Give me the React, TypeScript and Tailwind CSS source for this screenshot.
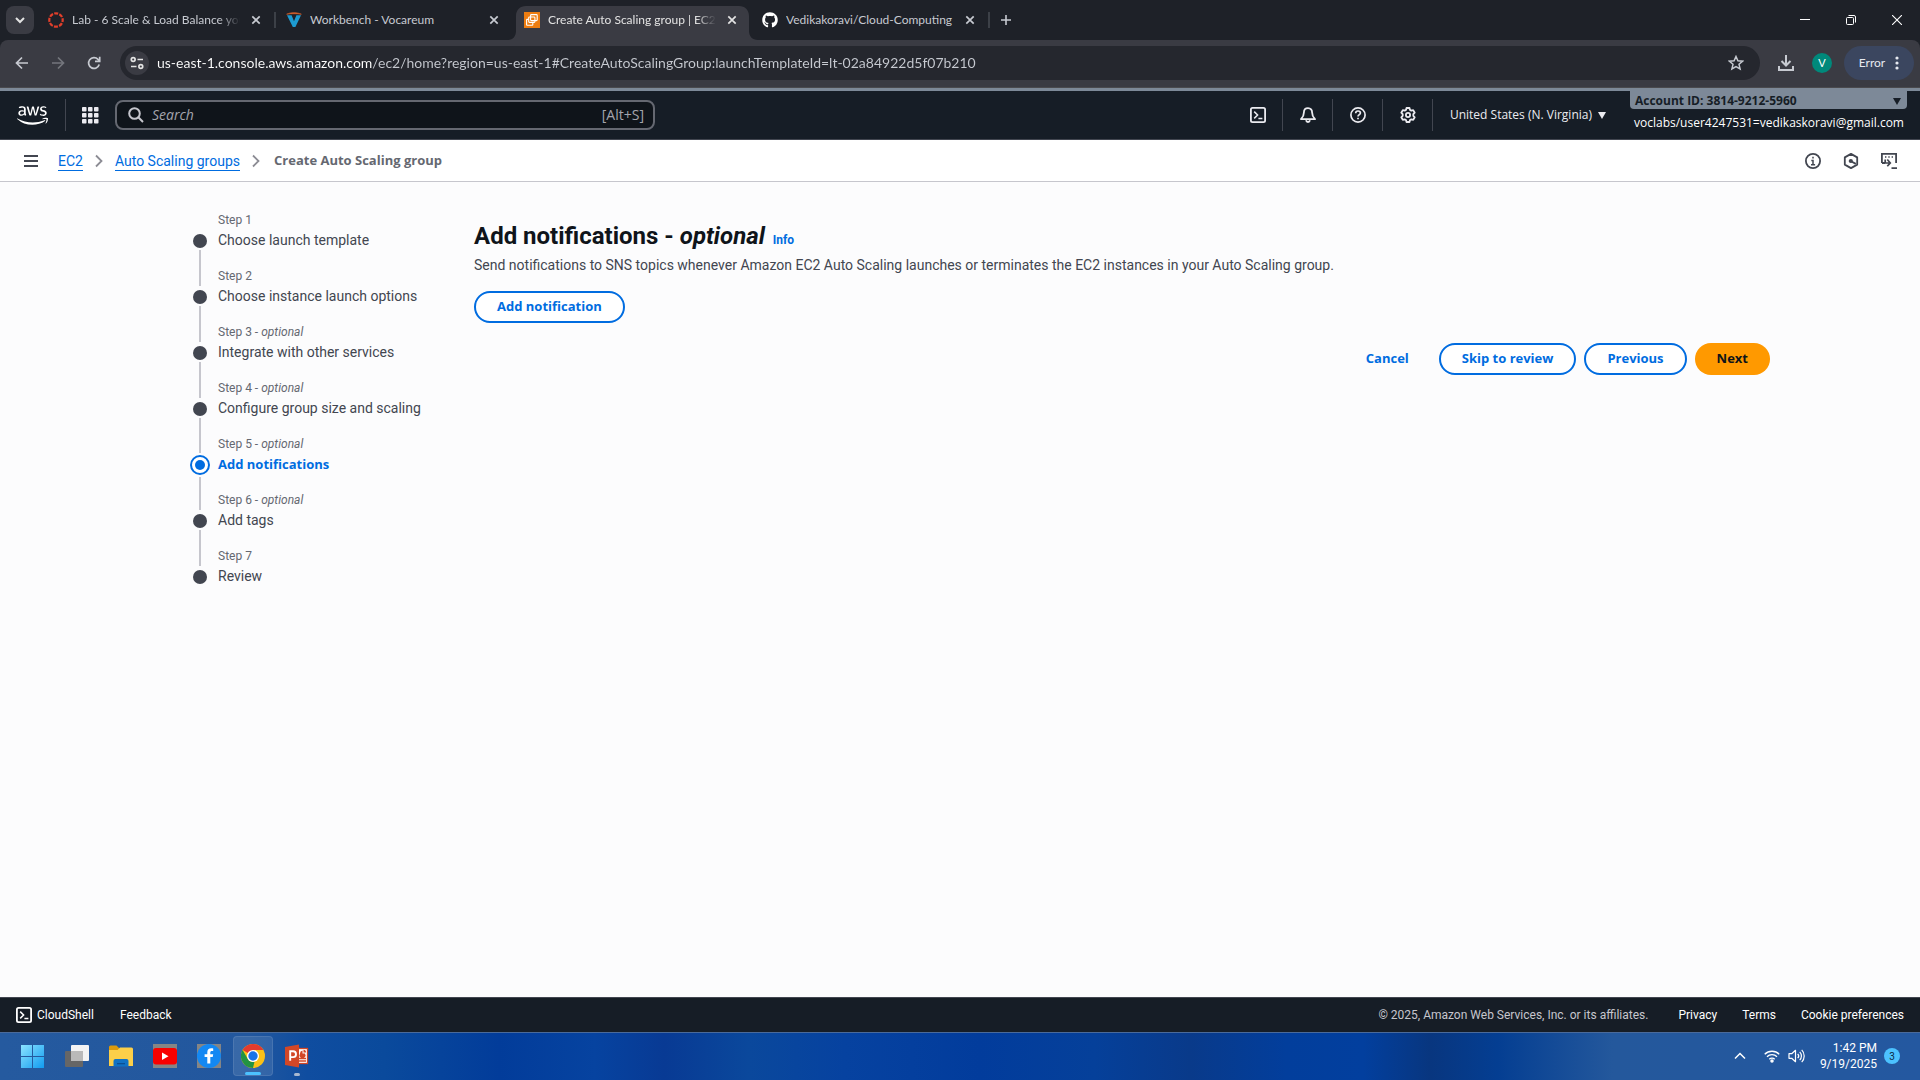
import React from "react";
import { FaAws, FaGithub } from "react-icons/fa";

type IconProps = { className?: string };

/* ---------- Browser icons ---------- */

const CloseIcon = ({ className = "size-4" }: IconProps) => (
  <svg viewBox="0 0 16 16" className={className} fill="none" stroke="currentColor" strokeWidth="1.7">
    <path d="M4.3 4.3l7.4 7.4M11.7 4.3l-7.4 7.4" />
  </svg>
);

const RingIcon = () => (
  <svg viewBox="0 0 16 16" className="size-4 shrink-0" fill="none">
    <circle cx="8" cy="8" r="6.7" stroke="#e13f2b" strokeWidth="2.2" strokeDasharray="4 1.26" strokeDashoffset="2" />
  </svg>
);

const VocareumIcon = () => (
  <svg viewBox="0 0 16 16" className="size-4 shrink-0">
    <path d="M1 3.2h4.6L8 9.2l2.4-6H15L9.4 15H6.8z" fill="#1d9bd1" />
    <path d="M.6 2.2C5 .1 11 .1 15.4 2.2 11 1.5 5 1.5.6 2.2z" fill="#d9622b" stroke="#d9622b" strokeWidth=".6" />
  </svg>
);

const Ec2Icon = () => (
  <svg viewBox="0 0 16 16" className="size-4 shrink-0">
    <rect width="16" height="16" fill="#ed7d11" />
    <g fill="none" stroke="#fff" strokeWidth="1.1">
      <rect x="6.6" y="2.6" width="6.6" height="6" rx=".8" />
      <rect x="4.7" y="5" width="6.2" height="5.4" rx=".8" />
      <path d="M4.5 7.4H3.1a.5.5 0 00-.5.5v4.9c0 .3.2.5.5.5h5.2c.3 0 .5-.2.5-.5v-2" />
    </g>
  </svg>
);

/* ---------- Console icons ---------- */

const ShellIcon = () => (
  <svg viewBox="0 0 16 16" className="size-4 shrink-0" fill="none" stroke="currentColor" strokeWidth="1.8">
    <rect x=".9" y=".9" width="14.2" height="14.2" rx="1.6" />
    <path d="M4.2 4.6L7.6 8l-3.4 3.4M8.4 11.6h4" strokeWidth="1.5" />
  </svg>
);
const BellIcon = () => (
  <svg viewBox="0 0 16 16" className="size-4" fill="none" stroke="currentColor" strokeWidth="1.8" strokeLinejoin="round">
    <path d="M8 1.1c-2.7 0-4.1 2-4.1 4.3 0 3.6-.9 4.7-2.9 6.8h14c-2-2.1-2.9-3.2-2.9-6.8 0-2.3-1.4-4.3-4.1-4.3z" />
    <path d="M6 13.2c.3 1.2 1 1.8 2 1.8s1.7-.6 2-1.8" />
  </svg>
);
const HelpIcon = () => (
  <svg viewBox="0 0 16 16" className="size-4" fill="none" stroke="currentColor" strokeWidth="1.7">
    <circle cx="8" cy="8" r="7.1" />
    <path d="M5.7 6.2C5.7 4.7 6.7 4 8 4s2.4.8 2.4 2c0 1.7-2.4 1.7-2.4 3.6" />
    <path d="M8 10.8v1.5" />
  </svg>
);
const GearIcon = () => (
  <svg viewBox="0 0 16 16" className="size-4" fill="none" stroke="currentColor" strokeWidth="1.8" strokeLinejoin="round">
    <path d="M6.5 1h3l.5 1.9 1.3.7 1.9-.5 1.5 2.6-1.4 1.5v1.6l1.4 1.5-1.5 2.6-1.9-.5-1.3.7-.5 1.9h-3l-.5-1.9-1.3-.7-1.9.5-1.5-2.6 1.4-1.5V7.2L1.3 5.7l1.5-2.6 1.9.5L6 2.9z" />
    <circle cx="8" cy="8" r="2.1" />
  </svg>
);
const InfoIcon = () => (
  <svg viewBox="0 0 16 16" className="size-4" fill="none" stroke="currentColor" strokeWidth="1.8">
    <circle cx="8" cy="8" r="7.1" />
    <path d="M8 3.8v1.7M6.3 7.4H8v4.1M6 11.7h4.1" strokeWidth="1.5" />
  </svg>
);
const HexIcon = () => (
  <svg viewBox="0 0 16 16" className="size-4" fill="none" stroke="currentColor" strokeWidth="1.8" strokeLinejoin="round">
    <path d="M8 .9l6.2 3.5v7.2L8 15.1l-6.2-3.5V4.4z" />
    <circle cx="7.8" cy="8" r="2.1" fill="currentColor" stroke="none" />
    <path d="M8 8.3l4.8 2.6" />
  </svg>
);
const ToolsIcon = () => (
  <svg viewBox="0 0 16 16" className="size-4" fill="none" stroke="currentColor" strokeWidth="1.8">
    <path d="M.9 10V.9h14.2V10M1 10h3" />
    <path d="M4 3.9h1.4M7.3 3.9h1.4M10.6 3.9H12" strokeWidth="1.5" />
    <path d="M4.2 6.5V10h4.4M6.3 6.5l3 3.4-3 3.4M10.5 15.1H16" strokeWidth="1.7" />
  </svg>
);

/* ---------- Browser chrome ---------- */

type TabInfo = { title: string; icon: React.ReactNode; active?: boolean; divider?: boolean; long?: boolean };

const tabs: TabInfo[] = [
  { title: "Lab - 6 Scale & Load Balance your", icon: <RingIcon />, divider: true, long: true },
  { title: "Workbench - Vocareum", icon: <VocareumIcon /> },
  { title: "Create Auto Scaling group | EC2 |", icon: <Ec2Icon />, active: true, long: true },
  { title: "Vedikakoravi/Cloud-Computing", icon: <FaGithub className="size-4 shrink-0 text-white" />, divider: true },
];

function Tab({ title, icon, active, divider, long }: TabInfo) {
  return (
    <div className={"relative flex h-10 w-[238px] shrink-0 items-center " + (active ? "text-[#e3e3e3]" : "text-[#c7cad1]")}>
      {active && (
        <svg viewBox="0 0 250 34" className="absolute bottom-0 -left-2 h-[34px] w-[250px]" fill="#3a3b43">
          <path d="M0 34c5 0 8-4 8-9V10C8 4 12 0 18 0h213c6 0 10 4 10 10v15c0 5 3 9 9 9z" />
        </svg>
      )}
      <div className="relative flex h-full w-[228px] items-center gap-2 pl-2 pr-1">
        {icon}
        <button className={"min-w-0 flex-1 overflow-hidden text-left text-xs whitespace-nowrap " + (long ? "mask-r-from-88% mask-r-to-100%" : "")}>{title}</button>
        <button aria-label={"Close " + title} className="shrink-0"><CloseIcon /></button>
      </div>
      {divider && <span className="ml-1.5 h-4 w-0.5 bg-[#3c4047]" />}
    </div>
  );
}

function BrowserChrome() {
  return (
    <header className="bg-[#1e2128] font-['Lato',sans-serif]">
      <div className="flex h-10 items-center">
        <button aria-label="Search tabs" className="ml-1.5 grid size-7 place-items-center rounded-lg bg-[#3a3b43] text-[#e3e3e3]">
          <svg viewBox="0 0 12 12" className="size-3" fill="none" stroke="currentColor" strokeWidth="2"><path d="M2 4l4 4 4-4" /></svg>
        </button>
        <div className="ml-1.5 flex">
          {tabs.map((t) => <Tab key={t.title} {...t} />)}
        </div>
        <button aria-label="New tab" className="ml-2 text-[#c7cad1]">
          <svg viewBox="0 0 12 12" className="size-3" fill="none" stroke="currentColor" strokeWidth="1.6"><path d="M6 1v10M1 6h10" /></svg>
        </button>
        <div className="ml-auto flex text-white">
          <button aria-label="Minimize" className="grid h-10 w-[46px] place-items-center">
            <svg viewBox="0 0 10 10" className="size-2.5" stroke="currentColor"><path d="M0 4.5h10" /></svg>
          </button>
          <button aria-label="Restore" className="grid h-10 w-[46px] place-items-center">
            <svg viewBox="0 0 10 10" className="size-2.5" fill="none" stroke="currentColor"><rect x=".5" y="2.5" width="7" height="7" rx="1" /><path d="M2.5 .5H8a1.5 1.5 0 011.5 1.5v5.5" /></svg>
          </button>
          <button aria-label="Close window" className="grid h-10 w-[46px] place-items-center">
            <svg viewBox="0 0 10 10" className="size-2.5" fill="none" stroke="currentColor" strokeWidth="1.1"><path d="M0 0l10 10M10 0L0 10" /></svg>
          </button>
        </div>
      </div>
      <div className="flex h-12 items-start rounded-t-lg border-b border-[#4a4a4e] bg-[#3a3b43] pt-1.5 pr-1.5 text-[#c7cad1]">
        <div className="flex h-[34px] w-[120px] shrink-0 items-center gap-5 pl-[14px]">
          <button aria-label="Back">
            <svg viewBox="0 0 16 16" className="size-4" fill="none" stroke="currentColor" strokeWidth="1.7"><path d="M14 8H3M8 2.5L2.5 8 8 13.5" /></svg>
          </button>
          <button aria-label="Forward" className="text-[#74767d]">
            <svg viewBox="0 0 16 16" className="size-4" fill="none" stroke="currentColor" strokeWidth="1.7"><path d="M2 8h11M8 2.5L13.5 8 8 13.5" /></svg>
          </button>
          <button aria-label="Reload">
            <svg viewBox="0 0 16 16" className="size-4" fill="none" stroke="currentColor" strokeWidth="1.7"><path d="M13.2 9.5A5.4 5.4 0 1112 4.4l1.5 1.7" /><path d="M13.7 1.8v4.6H9" /></svg>
          </button>
        </div>
        <div className="flex h-[34px] flex-1 items-center rounded-full bg-[#25272e] pr-4 pl-[5px]">
          <button aria-label="Site information" className="grid size-6 shrink-0 place-items-center rounded-full bg-[#3a3b43] text-[#e3e3e3]">
            <svg viewBox="0 0 14 14" className="size-3.5" fill="none" stroke="currentColor" strokeWidth="1.7"><circle cx="3.2" cy="3.5" r="1.9" /><path d="M7.5 3.5H13M1 10.5h5.5" /><circle cx="10.8" cy="10.5" r="1.9" /></svg>
          </button>
          <input
            aria-label="Address"
            readOnly
            value="us-east-1.console.aws.amazon.com/ec2/home?region=us-east-1#CreateAutoScalingGroup:launchTemplateId=lt-02a84922d5f07b210"
            className="ml-2 h-8 min-w-0 flex-1 bg-linear-to-r from-white from-[216px] to-[#c7cad1] to-[216px] bg-clip-text pb-0.5 text-sm text-transparent outline-none"
          />
          <button aria-label="Bookmark this tab">
            <svg viewBox="0 0 16 16" className="size-4" fill="none" stroke="currentColor" strokeWidth="1.5"><path d="M8 1.5l1.9 4.3 4.7.4-3.6 3.1 1.1 4.6L8 11.5l-4.1 2.4L5 9.3 1.4 6.2l4.7-.4z" /></svg>
          </button>
        </div>
        <div className="ml-4 flex h-[34px] items-center">
          <button aria-label="Downloads" className="grid w-5 place-items-center">
            <svg viewBox="0 0 18 18" className="size-[18px]" fill="none" stroke="currentColor" strokeWidth="2"><path d="M9 1v10M4.5 7L9 11.5 13.5 7M2 12v4h14v-4" /></svg>
          </button>
          <button aria-label="Profile" className="ml-4 grid size-5 place-items-center rounded-full bg-[#00897b] text-[11px] text-white">V</button>
          <button className="ml-3 flex h-[34px] w-[70px] items-center justify-center gap-2.5 rounded-full bg-[#3b465f] text-xs text-[#e6e9f0]">
            Error
            <svg viewBox="0 0 4 14" className="h-3.5 w-1" fill="currentColor"><circle cx="2" cy="2" r="1.6" /><circle cx="2" cy="7" r="1.6" /><circle cx="2" cy="12" r="1.6" /></svg>
          </button>
        </div>
      </div>
    </header>
  );
}

/* ---------- Console navigation ---------- */

const navTools = [
  { label: "CloudShell", icon: <ShellIcon /> },
  { label: "Notifications", icon: <BellIcon /> },
  { label: "Support", icon: <HelpIcon /> },
  { label: "Settings", icon: <GearIcon /> },
];

function ConsoleNav() {
  return (
    <nav className="flex h-[52px] items-center border-t-[3px] border-b border-t-[#7d8998] border-b-[#424650] bg-[#161d26] pr-[13px] font-['Open_Sans',sans-serif] text-[#ebebf0]">
      <a href="#home" aria-label="AWS" className="ml-[17px]"><FaAws className="size-[31px] text-white" /></a>
      <span className="ml-[17px] h-8 w-px bg-[#424650]" />
      <button aria-label="Services" className="ml-4">
        <svg viewBox="0 0 17 17" className="size-[17px]" fill="currentColor">
          {[0, 6, 12].map((y) => [0, 6, 12].map((x) => <rect key={x + "-" + y} x={x} y={y} width="4.5" height="4.5" rx=".8" />))}
        </svg>
      </button>
      <label className="ml-4 flex h-[30px] w-[540px] items-center rounded-lg border-2 border-[#656871] bg-[#0f141a] pr-[9px] pl-[11px]">
        <svg viewBox="0 0 16 16" className="size-4 text-[#c6c6cd]" fill="none" stroke="currentColor" strokeWidth="2"><circle cx="6.5" cy="6.5" r="5.3" /><path d="M10.3 10.3L15 15" /></svg>
        <input placeholder="Search" aria-label="Search" className="ml-2 min-w-0 flex-1 bg-transparent text-sm outline-none placeholder:text-[#a4a4ad] placeholder:italic" />
        <span className="text-sm text-[#a4a4ad]">[Alt+S]</span>
      </label>
      <div className="ml-auto flex items-center">
        {navTools.map((t) => (
          <button key={t.label} aria-label={t.label} className="grid h-8 w-[50px] place-items-center border-r border-[#424650] pl-0.5">{t.icon}</button>
        ))}
        <button className="ml-[17px] flex items-center gap-1.5 text-xs">
          United States (N. Virginia)
          <svg viewBox="0 0 8 7" className="h-[7px] w-2" fill="currentColor"><path d="M0 0h8L4 7z" /></svg>
        </button>
      </div>
      <div className="ml-6 h-full w-[277px]">
        <button className="flex h-[18px] w-full items-center justify-between rounded-b bg-[#7d8998] px-[5px] pt-0.5 text-xs leading-4 font-bold text-[#161d26]">
          Account ID: 3814-9212-5960
          <svg viewBox="0 0 8 7" className="mr-px h-[7px] w-2" fill="currentColor"><path d="M0 0h8L4 7z" /></svg>
        </button>
        <p className="mt-1.5 pl-1 text-xs leading-4 font-medium whitespace-nowrap text-white">voclabs/user4247531=vedikaskoravi@gmail.com</p>
      </div>
    </nav>
  );
}

const Chevron = () => (
  <svg viewBox="0 0 8 14" className="h-3.5 w-2" fill="none" stroke="#8c8c94" strokeWidth="1.8"><path d="M1 1.5L6.5 7 1 12.5" /></svg>
);

function BreadcrumbBar() {
  return (
    <div className="flex h-[42px] items-center border-b border-[#c6c6cd] bg-white pr-[23px] pl-6 text-sm text-[#424650]">
      <button aria-label="Open navigation">
        <svg viewBox="0 0 14 12" className="h-3 w-3.5" stroke="currentColor" strokeWidth="2"><path d="M0 1h14M0 6h14M0 11h14" /></svg>
      </button>
      <div className="ml-5 flex items-center gap-3 text-[#006ce0]">
        <a href="#ec2" className="border-b border-[#006ce0] pt-0.5 leading-[18px]">EC2</a>
        <Chevron />
        <a href="#asg" className="border-b border-[#006ce0] pt-0.5 leading-[18px]">Auto Scaling groups</a>
        <Chevron />
        <span className="ml-0.5 font-['Open_Sans',sans-serif] text-[13px] font-bold text-[#656871]">Create Auto Scaling group</span>
      </div>
      <div className="ml-auto flex gap-[22px]">
        <button aria-label="Info"><InfoIcon /></button>
        <button aria-label="Amazon Q"><HexIcon /></button>
        <button aria-label="Tools"><ToolsIcon /></button>
      </div>
    </div>
  );
}

/* ---------- Wizard ---------- */

const steps = [
  { title: "Choose launch template" },
  { title: "Choose instance launch options" },
  { title: "Integrate with other services", optional: true },
  { title: "Configure group size and scaling", optional: true },
  { title: "Add notifications", optional: true, current: true },
  { title: "Add tags", optional: true },
  { title: "Review" },
];

function Stepper() {
  return (
    <ol className="w-[284px] shrink-0 text-[#424650]">
      {steps.map((s, i) => (
        <li key={s.title} className="flex h-14">
          <div className="flex w-5 flex-col items-center">
            <span className={"w-0.5 shrink-0 " + (i === 0 ? "h-5" : s.current ? "h-[19px] bg-[#c6c6cd]" : "h-5 bg-[#c6c6cd]")} />
            {s.current ? (
              <span className="my-0.5 grid size-5 shrink-0 place-items-center rounded-full border-2 border-[#006ce0] bg-white"><span className="size-2.5 rounded-full bg-[#006ce0]" /></span>
            ) : (
              <span className="mt-1 mb-0.5 size-3.5 shrink-0 rounded-full bg-[#424650]" />
            )}
            {i < steps.length - 1 && <span className="w-0.5 flex-1 bg-[#c6c6cd]" />}
          </div>
          <div className="ml-2 whitespace-nowrap">
            <p className="text-xs leading-5 text-[#656871]">Step {i + 1}{s.optional && <> - <i>optional</i></>}</p>
            <a href={"#step-" + (i + 1)} className={"block leading-5 " + (s.current ? "font-['Open_Sans',sans-serif] text-[13px] font-bold text-[#006ce0]" : "text-sm")}>{s.title}</a>
          </div>
        </li>
      ))}
    </ol>
  );
}

const bold = "h-8 rounded-full font-['Open_Sans',sans-serif] text-[13px] font-bold ";
const pill = bold + "border-2 border-[#006ce0] bg-white px-[21px] text-[#006ce0]";

function Content() {
  return (
    <section className="min-w-0 flex-1 pt-[11px]">
      <h1 className="text-2xl leading-[30px] font-bold text-[#0f141a]">
        Add notifications - <i>optional</i> <a href="#info" className="ml-0.5 text-xs text-[#006ce0]">Info</a>
      </h1>
      <p className="mt-1 text-sm leading-5 text-[#424650]">
        Send notifications to SNS topics whenever Amazon EC2 Auto Scaling launches or terminates the EC2 instances in your Auto Scaling group.
      </p>
      <button className={"mt-4 " + pill}>Add notification</button>
      <div className="mt-5 flex justify-end gap-2">
        <button className={bold + "mr-0.5 px-5 text-[#006ce0]"}>Cancel</button>
        <button className={pill}>Skip to review</button>
        <button className={pill}>Previous</button>
        <button className={bold + "bg-[#ff9900] px-[22px] text-[#0f141a]"}>Next</button>
      </div>
    </section>
  );
}

/* ---------- Footer and taskbar ---------- */

function ConsoleFooter() {
  return (
    <footer className="flex h-[35px] items-center border-t border-[#424650] bg-[#161d26] px-4 text-xs text-white">
      <button className="flex items-center gap-[5px]"><ShellIcon />CloudShell</button>
      <a href="#feedback" className="ml-[26px]">Feedback</a>
      <span className="mr-[30px] ml-auto text-[#c6c6cd]">© 2025, Amazon Web Services, Inc. or its affiliates.</span>
      <div className="flex gap-[25px]">
        <a href="#privacy">Privacy</a>
        <a href="#terms">Terms</a>
        <a href="#cookies">Cookie preferences</a>
      </div>
    </footer>
  );
}

const WindowsIcon = () => (
  <svg viewBox="0 0 24 24" className="size-6">
    <defs><linearGradient id="win" x1="0" y1="0" x2="1" y2="1"><stop offset="0" stopColor="#8be3ff" /><stop offset="1" stopColor="#119bf0" /></linearGradient></defs>
    <path fill="url(#win)" d="M0 1h11v11H0zM12 1h11v11H12zM0 13h11v11H0zM12 13h11v11H12z" />
  </svg>
);
const TaskViewIcon = () => (
  <svg viewBox="0 0 24 24" className="size-6">
    <rect x="6" y="1" width="18" height="16" rx="1" fill="#f3f3f3" />
    <rect x="0" y="7" width="18" height="16" rx="1" fill="#666" />
    <path d="M6 7h12v10H6z" fill="#b9b9b9" />
  </svg>
);
const FolderIcon = () => (
  <svg viewBox="0 0 24 24" className="size-6">
    <path d="M0 3a1.5 1.5 0 011.5-1.5h6L10 4v4H0z" fill="#dc9a0c" />
    <path d="M0 6h8.5L11 3.5h11.5A1.5 1.5 0 0124 5v17H0z" fill="#fccf49" />
    <path d="M4.500 22.500V17a2 2 0 012-2h11a2 2 0 012 2v5.500z" fill="#1072c5" />
    <path d="M8 19h8v1.300H8z" fill="#0c4f92" />
  </svg>
);
const YouTubeIcon = () => (
  <svg viewBox="0 0 24 24" className="size-6">
    <rect width="24" height="24" fill="#858585" />
    <rect y="4" width="24" height="16.5" rx="3" fill="#f80000" />
    <path d="M9 8.5l6.5 3.7L9 15.9z" fill="#fff" />
  </svg>
);
const FacebookIcon = () => (
  <svg viewBox="0 0 24 24" className="size-6">
    <rect width="24" height="24" fill="#858585" />
    <circle cx="12" cy="12" r="12" fill="#1388f3" />
    <path d="M10.3 19.5v-6.4H7.6v-2.9h2.7V8.3c0-2.700 1.500-4 3.900-4 .9 0 1.700.1 2 .2v2.600h-1.300c-1.200 0-1.600.6-1.600 1.500v1.600h2.900l-.5 2.900h-2.400v6.400z" fill="#fff" />
  </svg>
);
const ChromeIcon = () => (
  <svg viewBox="0 0 24 24" className="size-6">
    <circle cx="12" cy="12" r="12" fill="#fbc116" />
    <path d="M12 12L1.6 6A12 12 0 0122.4 6H12z" fill="#e33b2e" />
    <path d="M1.6 6l5.2 9A6 6 0 0012 18l1.5-.2L12 24A12 12 0 011.6 6z" fill="#229342" />
    <circle cx="12" cy="12" r="6" fill="#fff" />
    <circle cx="12" cy="12" r="4.7" fill="#1a73e8" />
  </svg>
);
const PowerPointIcon = () => (
  <svg viewBox="0 0 24 24" className="size-6">
    <rect x="11.5" y="4.5" width="11" height="15" fill="#fff" stroke="#d24726" strokeWidth="1.3" />
    <path d="M15 9.5a3 3 0 105 0h-2.500V6.500A3 3 0 0015 9.500z" fill="#d24726" />
    <path d="M18.500 5.800v2.700H21a2.600 2.600 0 00-2.500-2.700z" fill="#d24726" />
    <path d="M14 14.5h7M14 17h7" stroke="#d24726" strokeWidth="1.3" />
    <path d="M0 3l14-2.500v23L0 21z" fill="#d24726" />
    <path d="M5.2 16.800V7.300h2.900a2.900 2.900 0 010 5.800H5.200" fill="none" stroke="#fff" strokeWidth="1.9" />
  </svg>
);

const apps = [
  { label: "Start", icon: <WindowsIcon /> },
  { label: "Task view", icon: <TaskViewIcon /> },
  { label: "File Explorer", icon: <FolderIcon /> },
  { label: "YouTube", icon: <YouTubeIcon /> },
  { label: "Facebook", icon: <FacebookIcon /> },
  { label: "Google Chrome", icon: <ChromeIcon />, state: "active" },
  { label: "PowerPoint", icon: <PowerPointIcon />, state: "open" },
];

function Taskbar() {
  return (
    <div className="flex h-12 items-center border-t border-[#4a6a9a] bg-[linear-gradient(90deg,#255a9f_0%,#22579e_13%,#0f4da0_16%,#0a4a9c_20%,#023c9a_26%,#0643a0_31%,#083a94_34.6%,#0a489c_39%,#0642a0_44%,#023c9c_51%,#05409a_57%,#093a8a_62%,#023e9c_67%,#023f9e_71%,#08367f_74.5%,#043e92_78%,#24589c_84%,#2458a0_100%)] pr-5 pb-px pl-[13px] text-white">
      <div className="flex gap-1">
        {apps.map((a) => (
          <button key={a.label} aria-label={a.label} className={"relative grid size-10 place-items-center rounded " + (a.state === "active" ? "border border-white/10 bg-white/10" : "")}>
            {a.icon}
            {a.state === "active" && <span className="absolute bottom-0 h-[3px] w-4 rounded-full bg-[#4cc2ff]" />}
            {a.state === "open" && <span className="absolute bottom-0 h-[3px] w-1.5 rounded-full bg-[#a8b8d0]" />}
          </button>
        ))}
      </div>
      <div className="ml-auto flex items-center">
        <button aria-label="Show hidden icons">
          <svg viewBox="0 0 12 8" className="h-2 w-3" fill="none" stroke="currentColor" strokeWidth="1.5"><path d="M1 6.5L6 1.5l5 5" /></svg>
        </button>
        <button aria-label="Network and volume" className="ml-[18px] flex items-center gap-2">
          <svg viewBox="0 0 16 14" className="h-3.5 w-4" fill="none" stroke="currentColor" strokeWidth="1.3">
            <path d="M.7 5.3a10.3 10.3 0 0114.6 0M3 7.8a7 7 0 0110 0M5.3 10.2a3.8 3.8 0 015.4 0" />
            <circle cx="8" cy="12" r="1.1" fill="currentColor" />
          </svg>
          <svg viewBox="0 0 17 16" className="h-4 w-[17px]" fill="none" stroke="currentColor" strokeWidth="1.2" strokeLinejoin="round">
            <path d="M1 5.7h2.7L7.5 2.3v11.4l-3.8-3.4H1zM9.7 5.8a3.2 3.2 0 010 4.4M11.7 3.8a6 6 0 010 8.4M13.7 1.9a8.7 8.7 0 010 12.2" />
          </svg>
        </button>
        <div className="ml-[15px] text-right text-xs leading-4">
          <p>1:42 PM</p>
          <p>9/19/2025</p>
        </div>
        <span className="ml-[7px] grid size-4 place-items-center rounded-full bg-[#4cc2ff] text-[10px] text-[#0b2a45]">3</span>
      </div>
    </div>
  );
}

export default function App() {
  return (
    <div className="flex min-h-screen flex-col bg-[#fcfcfd] font-['Roboto',sans-serif]">
      <BrowserChrome />
      <ConsoleNav />
      <BreadcrumbBar />
      <main className="flex-1">
        <div className="mx-auto flex max-w-[1620px] pt-7 pl-10">
          <Stepper />
          <Content />
        </div>
      </main>
      <ConsoleFooter />
      <Taskbar />
    </div>
  );
}
